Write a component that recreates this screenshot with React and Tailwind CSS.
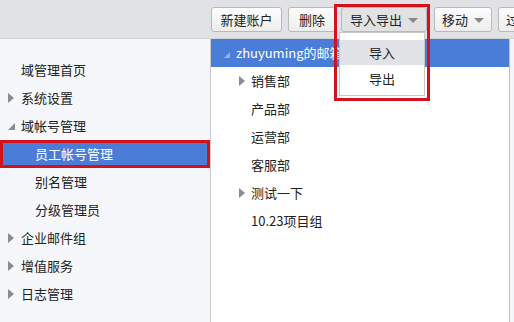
import React from 'react';

const font = { fontFamily: '"Noto Sans CJK SC", "Liberation Sans", sans-serif' };

function Caret() {
    return <span className="inline-block w-0 h-0 border-l-[5px] border-r-[5px] border-t-[5px] border-l-transparent border-r-transparent border-t-[#8a8a8a] ml-[6px] mt-[2px]"></span>;
}

function Arrow() {
    return <span className="inline-block w-0 h-0 border-t-[5px] border-b-[5px] border-l-[6px] border-t-transparent border-b-transparent border-l-[#8c8c8c]"></span>;
}

function Open() {
    return <span className="inline-block w-0 h-0 border-b-[7px] border-l-[7px] border-l-transparent border-b-[#8c8c8c]"></span>;
}

function Btn({ children, className = '', caret, active }) {
    return (
        <div className={`h-[25px] shrink-0 flex items-center justify-center rounded-[3px] border border-[#b9b9b9] text-[13px] text-[#222] ${active ? 'bg-[#e2e2e2]' : 'bg-gradient-to-b from-[#fdfdfd] to-[#ededed]'} ${className}`}>
            {children}
            {caret && <Caret />}
        </div>
    );
}

const sideItems = [
    { label: '域管理首页' },
    { label: '系统设置', icon: 'arrow' },
    { label: '域帐号管理', icon: 'open' },
    { label: '员工帐号管理', child: true, selected: true },
    { label: '别名管理', child: true },
    { label: '分级管理员', child: true },
    { label: '企业邮件组', icon: 'arrow' },
    { label: '增值服务', icon: 'arrow' },
    { label: '日志管理', icon: 'arrow' },
];

const treeItems = [
    { label: '销售部', arrow: true },
    { label: '产品部' },
    { label: '运营部' },
    { label: '客服部' },
    { label: '测试一下', arrow: true },
    { label: '10.23项目组' },
];

export default function App() {
    return (
        <div className="relative w-[514px] h-[322px] overflow-hidden bg-white flex flex-col" style={font}>
            {/* toolbar */}
            <div className="h-[39px] shrink-0 bg-[#e1e2e6] border-b border-[#d2d3d7] flex items-center pl-[211px] pt-[1px] overflow-hidden">
                <Btn className="w-[71px]">新建账户</Btn>
                <Btn className="w-[48px] ml-[6px]">删除</Btn>
                <Btn className="w-[86px] ml-[5px]" caret active>导入导出</Btn>
                <Btn className="w-[58px] ml-[7px]" caret>移动</Btn>
                <Btn className="w-[50px] ml-[6px] justify-start pl-[7px]">过滤</Btn>
            </div>

            <div className="flex flex-1 min-h-0">
                {/* sidebar */}
                <div className="w-[211px] shrink-0 bg-[#f6f7fa] border-r border-[#c9c9c9] pt-[17px] text-[13px] text-[#222]">
                    {sideItems.map((it) => (
                        <div key={it.label} className={`relative h-[28px] flex items-center ${it.selected ? 'bg-[#4a7dd7] text-white' : ''}`}>
                            <span className="w-[21px] shrink-0 flex justify-center pl-[1px]">
                                {it.icon === 'arrow' && <Arrow />}
                                {it.icon === 'open' && <Open />}
                            </span>
                            <span className={it.child ? 'pl-[14px]' : ''}>{it.label}</span>
                            {it.selected && <div className="absolute left-0 top-[0px] w-[210px] h-[28px] border-[3px] border-[#d3131b]"></div>}
                        </div>
                    ))}
                </div>

                {/* tree */}
                <div className="w-[299px] shrink-0 bg-white border-r border-[#c2c2c2] text-[13px] text-[#222]">
                    <div className="h-[28px] bg-[#4a7dd7] flex items-center pl-[13px] text-white">
                        <span className="opacity-60 mr-[6px]"><span className="inline-block w-0 h-0 border-b-[6px] border-l-[6px] border-l-transparent border-b-[#c8d6f2]"></span></span>
                        <span>zhuyuming的邮箱</span>
                    </div>
                    {treeItems.map((it) => (
                        <div key={it.label} className="h-[28px] flex items-center">
                            <span className="w-[40px] shrink-0 flex justify-end pr-[6px]">{it.arrow && <Arrow />}</span>
                            <span>{it.label}</span>
                        </div>
                    ))}
                </div>
                <div className="flex-1 bg-[#f4f5f7]"></div>
            </div>

            {/* dropdown */}
            <div className="absolute left-[339px] top-[32px] w-[86px] h-[64px] bg-white border border-[#c8c8c8] text-[13px] text-[#222] pt-[7px]">
                <div className="h-[25px] bg-[#e1e2e6] flex items-center justify-center">导入</div>
                <div className="h-[27px] flex items-center justify-center">导出</div>
            </div>
            <div className="absolute left-[334px] top-[4px] w-[96px] h-[97px] border-[3px] border-[#d3131b]"></div>
        </div>
    );
}
